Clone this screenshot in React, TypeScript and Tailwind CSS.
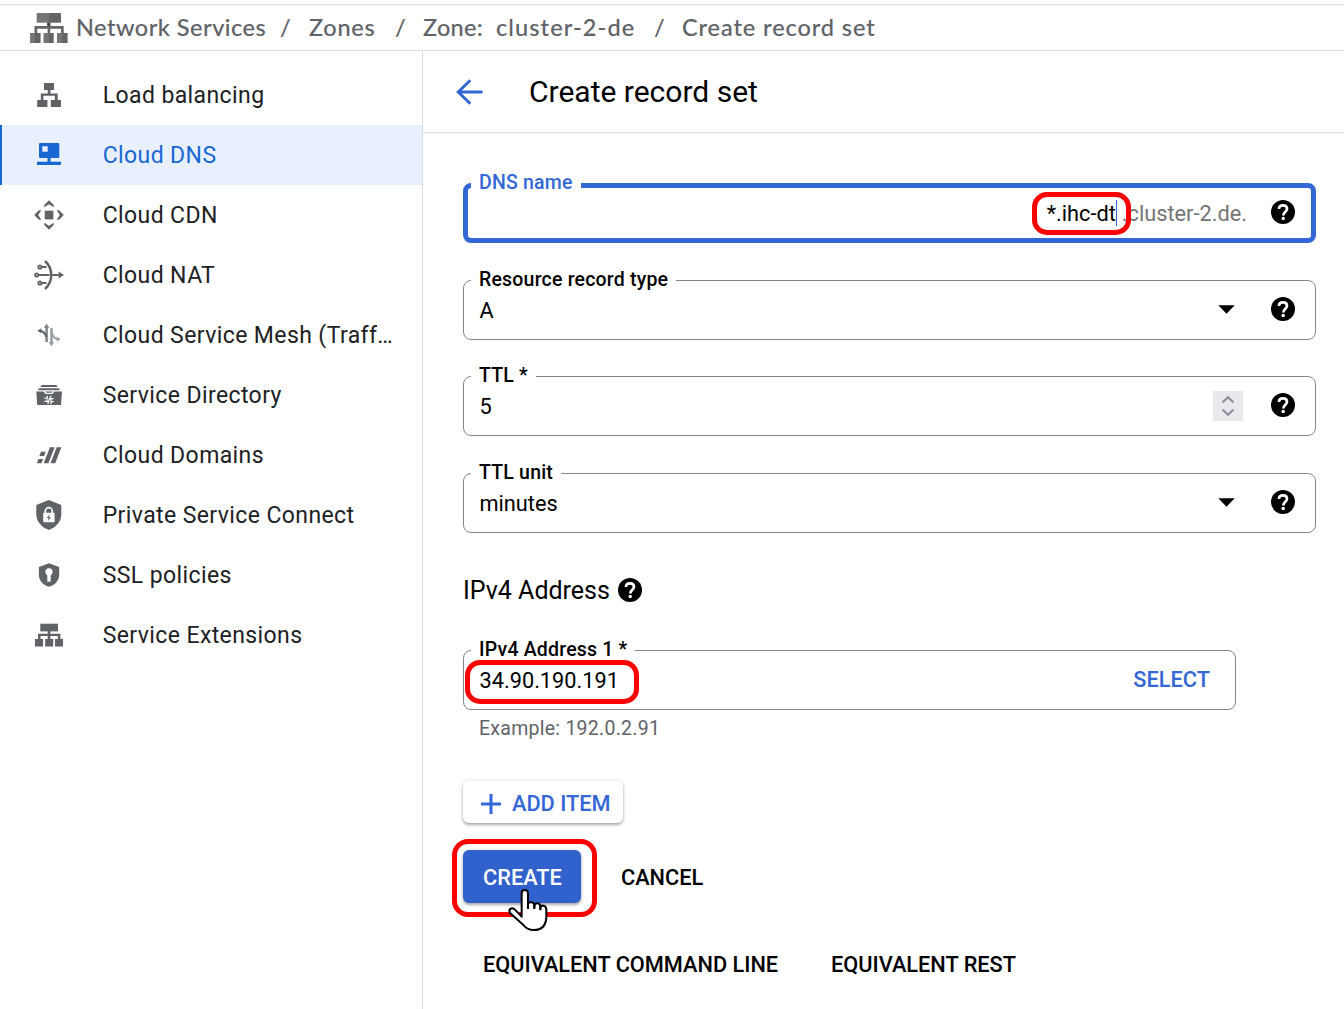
import type { ReactNode } from "react";

const GRAY = "#5f6368";

function LoadBalancingIcon() {
  return (
    <g fill={GRAY}>
      <rect x="10" y="3" width="10" height="7" />
      <path d="M13.7 10h2.8v3.4h7.2V20h-2.9v-4.2H9.4V20H6.8v-6.6h6.9z" />
      <rect x="3.2" y="20" width="10.2" height="7" />
      <rect x="16.8" y="20" width="10.2" height="7" />
    </g>
  );
}

function DnsIcon() {
  return (
    <g fill="#1967d2">
      <path
        fillRule="evenodd"
        d="M6.2 3h18q1.1 0 1.1 1.1V17q0 1-1.1 1h-18Q5 18 5 17V4.100Q5 3 6.200 3zM8.300 6.300v5.400h5.400V6.300z"
      />
      <rect x="13.500" y="18" width="3" height="4" />
      <rect x="3" y="21.700" width="24" height="3.300" />
    </g>
  );
}

function CdnIcon() {
  const chevron = "M15 .2L19.700 4.900V7.300L15 4.200L10.300 7.300V4.900z";
  return (
    <g fill={GRAY}>
      <rect x="10.700" y="10.700" width="8.700" height="8.700" />
      <path d={chevron} />
      <path d={chevron} transform="rotate(90 15 15)" />
      <path d={chevron} transform="rotate(180 15 15)" />
      <path d={chevron} transform="rotate(270 15 15)" />
    </g>
  );
}

function NatIcon() {
  return (
    <g fill="none" stroke={GRAY} strokeWidth="1.900">
      <path d="M11 1C19.300 8.500 19.300 21.500 11 29" strokeWidth="2.500" />
      <circle cx="5.900" cy="7" r="1.600" />
      <circle cx="2.600" cy="15" r="1.600" />
      <circle cx="5.900" cy="23" r="1.600" />
      <path d="M7.500 7H12.500M4.200 15H15.500M7.500 23H12.500M18.300 15H25" />
      <path d="M24.600 11.400L30 15L24.600 18.600z" fill={GRAY} stroke="none" />
    </g>
  );
}

function MeshIcon() {
  return (
    <g fill="none" strokeWidth="2.600">
      <path d="M12.600 7V22" stroke="#80868b" />
      <path d="M9.900 8L12.600 3.600L15.300 8z" fill="#80868b" />
      <path d="M17.500 8V23" stroke="#9aa0a6" />
      <path d="M14.800 22L17.500 26.500L20.200 22z" fill="#9aa0a6" />
      <path d="M6 10.800Q10.600 11.500 12.300 17" stroke={GRAY} strokeWidth="2" />
      <path d="M7.300 8.300L3.300 10.800L7.300 13.300z" fill={GRAY} />
      <path d="M17.800 12.500Q19.500 18.500 23.500 19" stroke="#9aa0a6" strokeWidth="2" />
      <path d="M22.800 16.600L26.600 19.200L22.800 21.800z" fill="#9aa0a6" />
    </g>
  );
}

function DirectoryIcon() {
  return (
    <g>
      <path d="M7.500 5h15l1 1.900h-17zM5 8.300h20l1 1.900H4z" fill={GRAY} />
      <path d="M2.300 11.500h7.200l2 2.400h7l2-2.400H28L27 25H3.200z" fill={GRAY} />
      <path d="M11.200 11.500h7.800l-1.200 1.200h-5.400z" fill={GRAY} />
      <g stroke="#fff" strokeWidth="1.200" fill="none">
        <path d="M13.300 15.800v2.400h-2.800M16.900 15.800l-1.400 2.900h4M13.700 24.200l1-2.800h-4.200M17 24.200v-2.500h2.600M12.500 20h5.500" />
      </g>
    </g>
  );
}

function DomainsIcon() {
  return (
    <path
      fill={GRAY}
      d="M9.700 23.200h4.700L20.700 7.300H16zM16.500 23.200h4.700L27.400 7.300h-4.700zM5.400 16h4.700l1.600-4.200H7zM2.800 23.200h4.700L9.100 19H4.400z"
    />
  );
}

function PrivateIcon() {
  return (
    <g>
      <path d="M14.800 0L27.300 5v9.500c0 7-5.200 12.700-12.500 15.500C7.500 27.200 2.300 21.500 2.300 14.500V5z" fill={GRAY} />
      <path d="M11.300 13.500v-2.300a3.500 3.500 0 0 1 7 0v2.300" fill="none" stroke="#fff" strokeWidth="1.700" />
      <rect x="9.200" y="12.700" width="11.400" height="9.600" rx="1" fill="#fff" />
      <path d="M15.600 14.200L12.700 18h1.800l-.5 2.900L17 17.200h-1.900z" fill={GRAY} />
    </g>
  );
}

function SslIcon() {
  return (
    <g>
      <path d="M15 3.200L25.200 7v7.500c0 6-4 10.500-10.200 12.200C8.800 25 4.900 20.500 4.900 14.500V7z" fill={GRAY} />
      <circle cx="15" cy="11.800" r="3.600" fill="#fff" />
      <rect x="13.300" y="13" width="3.400" height="8.700" fill="#fff" />
    </g>
  );
}

function ExtensionsIcon() {
  return (
    <g fill={GRAY}>
      <rect x="6.300" y="3.700" width="17.700" height="7.700" />
      <path d="M13.700 11h2.700v2.700h10V19.500h-2.600v-3.600h-7.400v3.600h-2.700v-3.600H6.500v3.600H4v-5.800h9.700z" />
      <rect x="1" y="19" width="8.100" height="7.500" />
      <rect x="11.200" y="19" width="8" height="7.500" />
      <rect x="21" y="19" width="8" height="7.500" />
    </g>
  );
}

const items: { label: string; icon: ReactNode; active?: boolean }[] = [
  { label: "Load balancing", icon: <LoadBalancingIcon /> },
  { label: "Cloud DNS", icon: <DnsIcon />, active: true },
  { label: "Cloud CDN", icon: <CdnIcon /> },
  { label: "Cloud NAT", icon: <NatIcon /> },
  { label: "Cloud Service Mesh (Traff…", icon: <MeshIcon /> },
  { label: "Service Directory", icon: <DirectoryIcon /> },
  { label: "Cloud Domains", icon: <DomainsIcon /> },
  { label: "Private Service Connect", icon: <PrivateIcon /> },
  { label: "SSL policies", icon: <SslIcon /> },
  { label: "Service Extensions", icon: <ExtensionsIcon /> },
];

function ProductLogo() {
  return (
    <svg width="38" height="30" viewBox="0 0 38 30" className="shrink-0">
      <path d="M17.600 9h2.600v4h13.500v7H31v-4.300H20.200V20h-2.600v-4.300H7.200V20H4.500v-7h13.100z" fill="#666" />
      <rect x="17.200" y="9.700" width="3.200" height="3.300" fill="#424242" />
      <rect x="6.700" width="12.300" height="9.700" fill="#757575" />
      <rect x="19" width="12" height="9.700" fill="#646464" />
      <rect x="0.300" y="20" width="10.300" height="10" fill="#646464" />
      <rect x="0.300" y="20" width="4.700" height="10" fill="#757575" />
      <rect x="13.700" y="20" width="10" height="10" fill="#646464" />
      <rect x="13.700" y="20" width="5" height="10" fill="#757575" />
      <rect x="27" y="20" width="10.600" height="10" fill="#646464" />
      <rect x="27" y="20" width="5" height="10" fill="#757575" />
    </svg>
  );
}

function HelpIcon() {
  return (
    <svg width="24" height="24" viewBox="0 0 24 24" className="shrink-0">
      <circle cx="12" cy="12" r="12" fill="#000" />
      <path
        d="M8 9.100C8 6.700 9.600 5.400 12 5.400S16 6.800 16 8.900C16 11.600 12.300 11.800 12.300 15.400"
        fill="none"
        stroke="#fff"
        strokeWidth="2.700"
      />
      <circle cx="12.200" cy="18.500" r="1.700" fill="#fff" />
    </svg>
  );
}

function Caret() {
  return (
    <svg width="17" height="9" viewBox="0 0 17 9" className="mb-0.5 mr-9 shrink-0">
      <path d="M.3.300h16.400L8.500 8.700z" fill="#000" />
    </svg>
  );
}

function FieldHelp() {
  return (
    <span className="mb-0.5 shrink-0">
      <HelpIcon />
    </span>
  );
}

function Field({ label, children }: { label: string; children: ReactNode }) {
  return (
    <div className="relative flex h-[60px] items-center rounded-lg border border-[#80868b] pl-[15.500px] pr-5">
      <span className="absolute left-[7px] -top-[13px] whitespace-nowrap bg-white px-2 text-[19.500px] leading-6 font-medium tracking-[0.200px]">
        {label}
      </span>
      {children}
    </div>
  );
}

function PointerHand() {
  return (
    <svg width="42" height="44" viewBox="0 0 126 132" className="absolute left-[54px] top-[49px]">
      <path
        d="M44 86V15Q44 6 53 6T63 15V60V50Q64 42 73 43Q82 44 82 52V60V53Q84 45 92 46Q100 47 100 56V64V59Q102 52 110 53Q118 56 118 65V88Q116 126 80 126Q62 126 50 112L10 76Q4 67 11 62Q18 58 26 67z"
        fill="#fff"
        stroke="#000"
        strokeWidth="6"
        strokeLinejoin="round"
      />
      <path d="M63 38V60M82 50V60M100 54V64" stroke="#000" strokeWidth="6" strokeLinecap="round" />
    </svg>
  );
}

export default function App() {
  return (
    <div className="flex h-[1009px] w-[1344px] flex-col overflow-hidden bg-white pt-1 font-['Roboto',sans-serif] text-black">
      <header className="flex h-[47px] shrink-0 items-center whitespace-pre border-y border-[#dadce0] pl-[30px] font-['Lato',sans-serif] text-[23.500px] font-medium text-[#5f6368] [-webkit-text-stroke:0.100px_#5f6368]">
        <ProductLogo />
        <span className="ml-2 w-[204px] tracking-[0.500px]">Network Services</span>
        <span className="w-[29px] [-webkit-text-stroke:0px]">/</span>
        <span className="w-[86px] tracking-[0.700px]">Zones</span>
        <span className="w-[28px] [-webkit-text-stroke:0px]">/</span>
        <span className="w-[73px] tracking-[0.300px]">Zone:</span>
        <span className="w-[158px] tracking-[1.100px]">cluster-2-de</span>
        <span className="w-[28px] [-webkit-text-stroke:0px]">/</span>
        <span className="tracking-[0.920px]">Create record set</span>
      </header>

      <div className="flex min-h-0 flex-1">
        <nav className="w-[423px] shrink-0 border-r border-[#dadce0] pt-[14px]">
          {items.map((item) => (
            <a
              key={item.label}
              className={
                item.active
                  ? "flex h-[60px] items-center border-l-2 border-[#1967d2] bg-[#e8f0fe] pl-8 text-[#1967d2]"
                  : "flex h-[60px] items-center pl-[34px] text-[#202124]"
              }
            >
              <svg width="30" height="30" viewBox="0 0 30 30" className="shrink-0">
                {item.icon}
              </svg>
              <span className="ml-[38.700px] mt-0.5 whitespace-nowrap text-[23px] tracking-[0.400px]">{item.label}</span>
            </a>
          ))}
        </nav>

        <main className="min-w-0 flex-1">
          <div className="flex h-[82px] items-center border-b border-[#dcdcdc] pl-[33px]">
            <svg width="27" height="26" viewBox="0 0 27 26" fill="none" stroke="#3367d6" strokeWidth="3">
              <path d="M14.300 1.200L2.300 13L14.300 24.800M2.300 13H26.500" />
            </svg>
            <h1 className="ml-[46px] text-[30px]">Create record set</h1>
          </div>

          <div className="flex flex-col pl-10 pr-7 pt-[50px]">
            <div className="relative flex h-[60px] items-center justify-end rounded-lg border-5 border-[#3367d6] pr-4 text-[21.750px]">
              <span className="absolute left-[3px] -top-[17px] bg-white px-2 text-[19.500px] leading-6 font-medium tracking-[0.200px] text-[#3367d6]">
                DNS name
              </span>
              <div className="relative mt-0.5">
                <span>*.ihc-dt</span>
                <div className="absolute -left-[15px] -top-[6px] z-10 h-[43px] w-[99px] rounded-[15px] border-5 border-[#f00]" />
              </div>
              <div className="mr-[5px] h-[26px] w-px bg-[#3367d6]" />
              <span className="mr-6 mt-0.5 text-[#757575]">.cluster-2.de.</span>
              <FieldHelp />
            </div>

            <div className="mt-[37px]">
              <Field label="Resource record type">
                <span className="mt-0.5 flex-1 text-[21.750px]">A</span>
                <Caret />
                <FieldHelp />
              </Field>
            </div>
            <div className="mt-9">
              <Field label="TTL *">
                <span className="mt-0.5 flex-1 text-[21.750px]">5</span>
                <div className="mr-7 flex h-[30px] w-[30px] items-center justify-center bg-[#e9e9ed]">
                  <svg width="14" height="22" viewBox="0 0 14 22" fill="none" stroke="#8f8f9d" strokeWidth="2.200">
                    <path d="M1.500 7.500L7 2.200L12.500 7.500M1.500 14.500L7 19.800L12.500 14.500" />
                  </svg>
                </div>
                <FieldHelp />
              </Field>
            </div>
            <div className="mt-[37px]">
              <Field label="TTL unit">
                <span className="mt-0.5 flex-1 text-[21.750px]">minutes</span>
                <Caret />
                <FieldHelp />
              </Field>
            </div>

            <div className="mt-[39px] flex h-9 items-center gap-2">
              <h2 className="mt-0.5 text-[25px]">IPv4 Address</h2>
              <HelpIcon />
            </div>

            <div className="mt-[42px] w-[773px]">
              <Field label="IPv4 Address 1 *">
                <span className="mt-0.5 flex-1 text-[21.750px]">34.90.190.191</span>
                <button className="mr-[5px] text-[21.750px] font-medium text-[#3367d6]">SELECT</button>
                <div className="absolute left-px top-[9px] h-11 w-[174px] rounded-[15px] border-5 border-[#f00]" />
              </Field>
            </div>
            <p className="ml-4 mt-[7px] text-[19.500px] leading-6 tracking-[0.260px] text-[#5f6368]">
              Example: 192.0.2.91
            </p>

            <button className="mt-10 flex h-[42px] w-[160px] items-center rounded-md pl-[18px] pt-[3px] text-[#3367d6] shadow-[0_2px_3px_rgba(0,0,0,0.300),0_0_4px_rgba(0,0,0,0.120)]">
              <svg width="20" height="20" viewBox="0 0 20 20" stroke="#3367d6" strokeWidth="3">
                <path d="M10 0V20M0 10H20" />
              </svg>
              <span className="ml-[11px] mt-px whitespace-nowrap text-[21.750px] font-medium">ADD ITEM</span>
            </button>

            <div className="mt-[27px] flex h-[53px] items-center">
              <div className="relative">
                <button className="h-[53px] w-[118px] rounded-md bg-[#3061cd] pl-px pt-1 text-[21.750px] font-medium text-white shadow-[0_2px_3px_rgba(0,0,0,0.300),0_0_4px_rgba(0,0,0,0.120)]">
                  CREATE
                </button>
                <div className="absolute -left-[11px] -top-[11px] h-[78px] w-[145px] rounded-[16px] border-5 border-[#f00]" />
                <div className="absolute -left-[10px] -top-[11px]">
                  <PointerHand />
                </div>
              </div>
              <button className="ml-10 mt-1 text-[21.750px] font-medium">CANCEL</button>
            </div>

            <div className="mt-[46px] flex pl-5 text-[21.750px] font-medium">
              <button className="w-[348px] whitespace-nowrap text-left">EQUIVALENT COMMAND LINE</button>
              <button className="whitespace-nowrap">EQUIVALENT REST</button>
            </div>
          </div>
        </main>
      </div>
    </div>
  );
}
